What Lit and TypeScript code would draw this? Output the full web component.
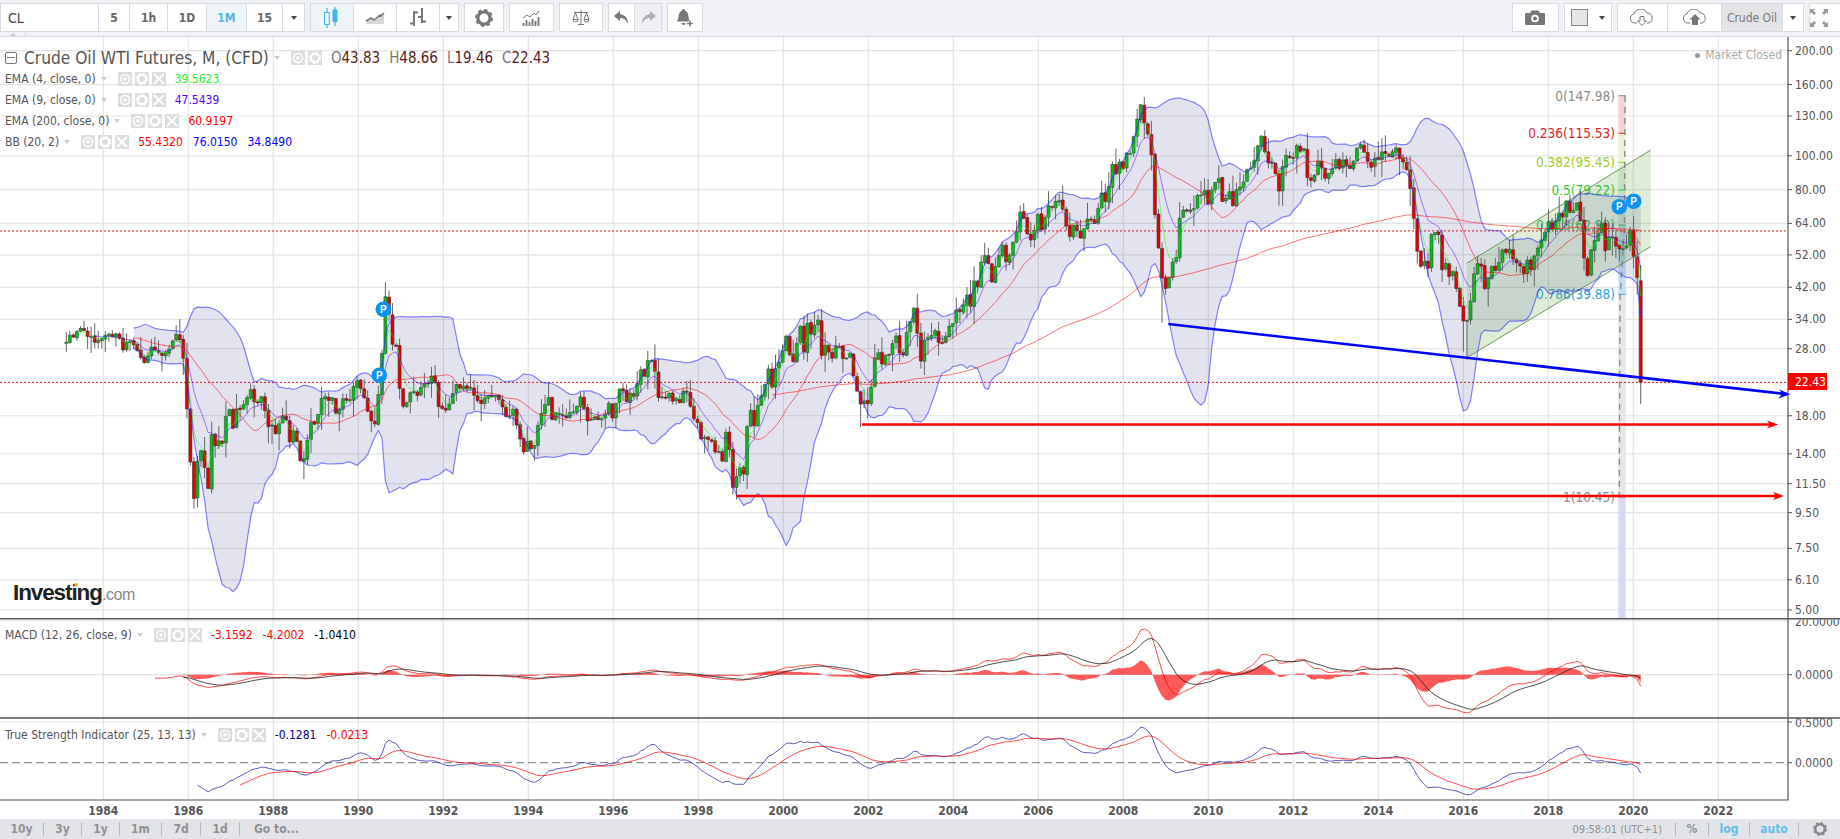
import { LitElement, html, svg, css, nothing } from "lit";
import { customElement } from "lit/decorators.js";

// monthly closes, Mar 1983 .. Mar 2020
const CLOSES = [
  29.27, 30.63, 30.25, 31.38, 32.0, 31.59, 30.36, 30.37, 29.23, 29.6,
  29.98, 30.55, 30.85, 30.26, 30.9, 29.98, 27.78, 29.28, 29.5, 28.75, 27.66, 26.41,
  25.56, 26.72, 28.29, 27.76, 27.38, 26.8, 27.26, 27.94, 29.5, 30.81, 29.72, 26.3,
  18.83, 13.26, 10.42, 13.34, 14.3, 12.78, 11.15, 15.9, 14.77, 15.27, 15.0, 17.94,
  18.75, 16.6, 18.83, 18.73, 19.38, 20.29, 21.37, 19.73, 19.59, 20.4, 18.64, 16.74,
  16.94, 16.01, 17.08, 17.99, 17.51, 15.16, 16.31, 15.18, 13.37, 13.58, 15.32, 17.24,
  17.03, 18.15, 20.19, 20.42, 19.9, 20.27, 18.31, 18.83, 20.13, 19.94, 19.89, 21.82,
  22.68, 21.54, 20.28, 18.54, 17.4, 17.07, 20.69, 27.17, 39.51, 35.23, 28.85, 28.44,
  21.54, 19.16, 19.63, 20.96, 21.13, 20.56, 21.68, 22.26, 22.23, 23.37, 22.42, 19.12,
  18.9, 18.68, 19.44, 20.85, 22.11, 21.6, 21.87, 21.48, 21.71, 20.62, 19.89, 19.5,
  20.26, 20.6, 20.44, 20.53, 20.02, 19.09, 17.89, 18.01, 18.79, 16.92, 15.43, 14.17,
  15.19, 14.48, 14.79, 16.9, 18.31, 19.37, 20.3, 17.56, 18.39, 18.19, 18.05, 17.76,
  18.39, 18.49, 19.17, 20.38, 18.89, 17.4, 17.56, 17.84, 17.54, 17.64, 18.18, 19.55,
  17.74, 19.54, 21.47, 21.2, 19.76, 20.92, 20.42, 22.25, 24.38, 23.35, 25.92, 25.92,
  24.15, 20.3, 20.41, 20.21, 20.88, 19.8, 20.14, 19.61, 21.18, 21.08, 19.15, 17.64,
  17.21, 15.44, 15.61, 15.39, 15.2, 14.18, 14.21, 13.34, 16.14, 14.42, 11.22, 12.05,
  12.75, 12.27, 16.76, 18.66, 16.84, 19.29, 20.53, 22.11, 24.51, 21.75, 24.59, 25.6,
  27.64, 30.43, 26.9, 25.74, 29.01, 32.5, 27.43, 33.12, 30.84, 32.7, 33.82, 26.8,
  28.66, 27.39, 26.29, 28.46, 28.37, 26.25, 26.35, 27.2, 23.43, 21.18, 19.44, 19.84,
  19.48, 21.74, 26.31, 27.29, 25.31, 26.86, 26.97, 28.98, 30.45, 27.22, 26.89, 31.2,
  33.51, 36.6, 31.04, 25.8, 29.56, 30.19, 30.54, 31.57, 29.2, 29.11, 30.41, 32.52,
  33.05, 36.16, 35.76, 37.38, 39.88, 37.05, 43.8, 42.12, 49.64, 51.76, 49.13, 43.45,
  48.2, 51.75, 55.4, 49.72, 51.97, 56.5, 60.57, 68.94, 66.24, 59.76, 57.32, 61.04,
  67.92, 61.41, 66.63, 71.88, 71.29, 73.93, 74.4, 70.26, 62.91, 58.73, 63.13, 61.05,
  58.14, 61.79, 65.87, 65.71, 64.01, 70.68, 78.21, 74.04, 81.66, 94.53, 88.71, 95.98,
  91.75, 101.84, 101.58, 113.46, 127.35, 140.0, 124.08, 115.46, 100.64, 67.81, 54.43, 44.6,
  41.68, 44.76, 49.66, 51.12, 66.31, 69.89, 69.45, 69.96, 70.61, 77.0, 77.28, 79.36,
  72.89, 79.66, 83.76, 86.15, 73.97, 75.63, 78.85, 71.92, 79.97, 81.43, 84.11, 91.38,
  92.19, 96.97, 106.72, 113.93, 102.7, 95.42, 95.7, 88.81, 79.2, 93.19, 100.36, 98.83,
  98.48, 107.07, 103.02, 104.87, 86.53, 84.96, 88.06, 96.47, 92.19, 86.24, 88.91, 91.82,
  97.49, 92.05, 97.23, 93.46, 91.97, 96.56, 105.03, 107.65, 102.33, 96.38, 92.72, 98.42,
  97.49, 102.59, 101.58, 99.74, 102.71, 105.37, 98.17, 95.96, 91.16, 80.54, 66.15, 53.27,
  48.24, 49.76, 47.6, 59.63, 60.3, 59.47, 47.12, 49.2, 45.09, 46.59, 41.65, 37.04,
  33.62, 33.75, 38.34, 45.92, 49.1, 48.33, 41.6, 44.7, 48.24, 46.86, 49.44, 53.72,
  52.81, 54.01, 50.6, 49.33, 48.32, 46.04, 50.17, 47.23, 51.67, 54.38, 57.4, 60.42,
  64.73, 61.64, 64.94, 68.57, 66.73, 74.15, 68.76, 69.8, 73.25, 65.31, 50.93, 45.41,
  53.79, 57.22, 60.14, 63.91, 53.5, 58.47, 58.58, 55.1, 54.07, 54.18, 55.17, 61.06,
  51.56, 44.76, 22.43,
];

const monthIndex = (y: number, m: number) => (y - 1983) * 12 + m - 3;

// wicks read off the chart where they stand out
const HIGHS: Record<number, number> = {
  [monthIndex(1990, 10)]: 41.15,
  [monthIndex(2008, 7)]: 147.27,
  [monthIndex(2020, 3)]: 48.66,
};
const LOWS: Record<number, number> = {
  [monthIndex(1986, 3)]: 9.75,
  [monthIndex(1998, 12)]: 10.35,
  [monthIndex(2001, 11)]: 16.7,
  [monthIndex(2008, 12)]: 33.2,
  [monthIndex(2016, 1)]: 27.5,
  [monthIndex(2016, 2)]: 26.05,
  [monthIndex(2020, 3)]: 19.46,
};

type Series = (number | null)[];

const barX = (i: number) => 66.3 + i * 3.546;
const yearX = (year: number) => 103.3 + (year - 1984) * 42.5;
const priceY = (p: number) => 50.7 + 151.6 * Math.log(200 / p);
const MACD_ZERO = 674.7;
const macdY = (v: number) => MACD_ZERO - v * 2.75;
const TSI_ZERO = 762.7;
const tsiY = (v: number) => TSI_ZERO - v * 81.4;

function ema(src: Series, n: number): Series {
  const out: Series = src.map(() => null);
  const first = src.findIndex((v) => v !== null);
  if (first < 0) return out;
  const k = 2 / (n + 1);
  let sum = 0;
  for (let i = first; i < src.length; i++) {
    const v = src[i] as number;
    if (i < first + n - 1) {
      sum += v;
    } else if (i === first + n - 1) {
      out[i] = (sum + v) / n;
    } else {
      out[i] = v * k + (out[i - 1] as number) * (1 - k);
    }
  }
  return out;
}

function diff(a: Series, b: Series): Series {
  return a.map((v, i) => (v === null || b[i] === null ? null : v - (b[i] as number)));
}

function linePath(src: Series, toY: (v: number) => number): string {
  let d = "";
  src.forEach((v, i) => {
    if (v === null) return;
    d += `${d ? "L" : "M"}${barX(i).toFixed(1)} ${toY(v).toFixed(1)}`;
  });
  return d;
}

// bollinger bands on the close
const mid: Series = CLOSES.map(() => null);
const upper: Series = CLOSES.map(() => null);
const lower: Series = CLOSES.map(() => null);
for (let i = 19; i < CLOSES.length; i++) {
  const win = CLOSES.slice(i - 19, i + 1);
  const m = win.reduce((a, b) => a + b, 0) / 20;
  const sd = Math.sqrt(win.reduce((a, b) => a + (b - m) * (b - m), 0) / 20);
  mid[i] = m;
  upper[i] = m + 2 * sd;
  lower[i] = m - 2 * sd;
}

const macdLine = diff(ema(CLOSES, 12), ema(CLOSES, 26));
const macdSignal = ema(macdLine, 9);
const macdHist = diff(macdLine, macdSignal);

const mom: Series = CLOSES.map((c, i) => (i === 0 ? null : c - CLOSES[i - 1]));
const absMom: Series = mom.map((v) => (v === null ? null : Math.abs(v)));
const tsiNum = ema(ema(mom, 25), 13);
const tsiDen = ema(ema(absMom, 25), 13);
const tsi: Series = tsiNum.map((v, i) => (v === null ? null : v / (tsiDen[i] as number)));
const tsiSignal = ema(tsi, 13);

function bandPath(): string {
  const top = linePath(upper, priceY);
  let back = "";
  for (let i = CLOSES.length - 1; i >= 19; i--) {
    back += `L${barX(i).toFixed(1)} ${priceY(lower[i] as number).toFixed(1)}`;
  }
  return top + back + "Z";
}

function histPath(): string {
  const first = macdHist.findIndex((v) => v !== null);
  let d = `M${barX(first).toFixed(1)} ${MACD_ZERO}`;
  for (let i = first; i < macdHist.length; i++) {
    d += `L${barX(i).toFixed(1)} ${macdY(macdHist[i] as number).toFixed(1)}`;
  }
  return d + `L${barX(macdHist.length - 1).toFixed(1)} ${MACD_ZERO}Z`;
}

function candlePaths() {
  let seed = 7;
  const rnd = () => {
    seed = (seed * 16807) % 2147483647;
    return (seed % 10000) / 10000;
  };
  let wicks = "";
  let up = "";
  let down = "";
  CLOSES.forEach((c, i) => {
    const open = i === monthIndex(2020, 3) ? 43.83 : i === 0 ? 29.0 : CLOSES[i - 1] * (1 + (rnd() - 0.5) * 0.012);
    const r1 = rnd();
    const r2 = rnd();
    const hi = HIGHS[i] ?? Math.max(open, c) * (1.004 + r1 * r1 * 0.11);
    const lo = LOWS[i] ?? Math.min(open, c) * (0.996 - r2 * r2 * 0.11);
    const x = barX(i);
    wicks += `M${x.toFixed(1)} ${priceY(hi).toFixed(1)}V${priceY(lo).toFixed(1)}`;
    const top = priceY(Math.max(open, c));
    const h = Math.max(priceY(Math.min(open, c)) - top, 1);
    const body = `M${(x - 1.5).toFixed(1)} ${top.toFixed(1)}h3v${h.toFixed(1)}h-3z`;
    if (c >= open) up += body;
    else down += body;
  });
  return { wicks, up, down };
}

const GRID_YEARS = Array.from({ length: 20 }, (_, i) => 1984 + i * 2);
const PRICE_TICKS: [number, string][] = [
  [200, "200.00"], [160, "160.00"], [130, "130.00"], [100, "100.00"], [80, "80.00"], [64, "64.00"],
  [52, "52.00"], [42, "42.00"], [34, "34.00"], [28, "28.00"], [18, "18.00"], [14, "14.00"],
  [11.5, "11.50"], [9.5, "9.50"], [7.5, "7.50"], [6.1, "6.10"], [5, "5.00"],
];

// fibonacci retracement column: label, y, text colour
const FIBS: [string, number, string][] = [
  ["0(147.98)", 95.7, "#8a8a8a"],
  ["0.236(115.53)", 133.3, "#d9272e"],
  ["0.382(95.45)", 162.3, "#9ccc2c"],
  ["0.5(79.22)", 190, "#2ecc3c"],
  ["0.618(62.99)", 225, "#45b56a"],
  ["0.786(39.88)", 294.3, "#2f9fd6"],
  ["1(10.45)", 497, "#8a8a8a"],
];

const gearIcon = (size: number, color: string) => svg`
  <svg width=${size} height=${size} viewBox="0 0 24 24">
    <circle cx="12" cy="12" r="8.2" fill="none" stroke=${color} stroke-width="4.4"></circle>
    <circle cx="12" cy="12" r="10" fill="none" stroke=${color} stroke-width="4" stroke-dasharray="3.9 3.95"></circle>
  </svg>`;

const caret = () => html`<span class="caret"></span>`;

@customElement("app-root")
export class AppRoot extends LitElement {
  static styles = css`
    :host {
      display: block;
      width: 1840px;
      height: 839px;
      overflow: hidden;
      background: #fff;
      font-family: "DejaVu Sans", "Liberation Sans", sans-serif;
      font-stretch: condensed;
      color: #555;
    }
    .toolbar {
      position: relative;
      display: flex;
      justify-content: space-between;
      height: 37px;
      box-sizing: border-box;
      padding-top: 3px;
      background: #eff1f5;
      border-bottom: 1px solid #d9dade;
      overflow: hidden;
    }
    .tools,
    .group {
      display: flex;
      height: 29px;
    }
    .tools {
      gap: 5px;
    }
    .group {
      box-sizing: border-box;
      background: #fff;
      border: 1px solid #d8dbe0;
    }
    .btn {
      display: flex;
      align-items: center;
      justify-content: center;
      box-sizing: border-box;
      height: 100%;
      border-right: 1px solid #d8dbe0;
      font-size: 12px;
      font-weight: bold;
      color: #666;
    }
    .btn:last-child {
      border-right: none;
    }
    .btn.on {
      background: #eff4f8;
      color: #4cb8e8;
    }
    .btn.shade {
      background: #eff0f3;
    }
    .btn.layout {
      background: #e4e4e6;
      font-weight: normal;
      color: #777;
    }
    .sym {
      justify-content: flex-start;
      padding-left: 7px;
      font-size: 14px;
      font-weight: normal;
      color: #444;
    }
    .w98 { width: 98px; }
    .w31 { width: 31px; }
    .w38 { width: 38px; }
    .w39 { width: 39px; }
    .w40 { width: 40px; }
    .w36 { width: 36px; }
    .w21 { width: 21px; }
    .w43 { width: 43px; }
    .w18 { width: 18px; }
    .w42 { width: 42.5px; }
    .w26 { width: 26px; }
    .w33 { width: 33.5px; }
    .w45 { width: 45px; }
    .w46 { width: 46px; }
    .w50 { width: 50.5px; }
    .w54 { width: 54px; }
    .w61 { width: 61px; }
    .w20 { width: 20px; }
    .fit {
      padding: 0 0 0 6px;
      gap: 11px;
      justify-content: flex-start;
    }
    .full {
      margin-right: -4px;
      width: 35px;
    }
    .swatch {
      box-sizing: border-box;
      width: 17px;
      height: 17px;
      background: #e6e6e6;
      border: 1px solid #888;
    }
    .caret {
      width: 0;
      height: 0;
      border-left: 3.5px solid transparent;
      border-right: 3.5px solid transparent;
      border-top: 4px solid #444;
    }
    .handle {
      position: absolute;
      left: 0;
      top: 32px;
      width: 25px;
      height: 5px;
      border-right: 1px solid #d9dade;
    }
    .handle::before {
      content: "";
      position: absolute;
      left: 10px;
      top: 1px;
      border-left: 3px solid transparent;
      border-right: 3px solid transparent;
      border-bottom: 3px solid #c4c6cc;
    }
    .chart {
      position: relative;
      height: 782px;
    }
    .chart > svg {
      display: block;
    }
    .legend {
      position: absolute;
      left: 5px;
      display: flex;
      flex-direction: column;
      font-size: 12px;
    }
    .legend.main {
      top: 11px;
    }
    .legend.macd {
      top: 587px;
    }
    .legend.tsi {
      top: 687px;
    }
    .row {
      display: flex;
      align-items: center;
      height: 21px;
      white-space: nowrap;
    }
    .title {
      height: 20px;
      font-size: 17.2px;
      color: #555;
    }
    .minus {
      box-sizing: border-box;
      position: relative;
      width: 12px;
      height: 12px;
      margin-right: 7px;
      border: 1px solid #777;
      border-radius: 2px;
    }
    .minus::after {
      content: "";
      position: absolute;
      left: 1px;
      right: 1px;
      top: 4px;
      height: 1px;
      background: #777;
    }
    .drop {
      width: 0;
      height: 0;
      margin: 0 11px 0 5px;
      border-left: 3px solid transparent;
      border-right: 3px solid transparent;
      border-top: 4px solid #ccc;
    }
    .mini {
      display: flex;
      gap: 3px;
      margin-right: 9px;
    }
    .mini span {
      display: flex;
      align-items: center;
      justify-content: center;
      width: 14px;
      height: 14px;
      background: #ddd;
    }
    .vals {
      display: flex;
      gap: 10px;
    }
    .ohlc {
      display: flex;
      gap: 9px;
      font-size: 15px;
      color: #777;
    }
    .ohlc b {
      font-weight: normal;
      color: #5c1a1a;
    }
    .closed {
      position: absolute;
      right: 58px;
      top: 11px;
      display: flex;
      align-items: center;
      gap: 5px;
      font-size: 12px;
      color: #aaa;
    }
    .closed i {
      width: 5px;
      height: 5px;
      border-radius: 50%;
      background: #999;
    }
    .logo {
      position: absolute;
      left: 13px;
      top: 543px;
      display: flex;
      align-items: baseline;
      font-family: "Liberation Sans", sans-serif;
      font-stretch: normal;
      font-size: 22.5px;
      font-weight: bold;
      letter-spacing: -1.1px;
      color: #222;
    }
    .logo small {
      font-size: 16px;
      font-weight: normal;
      letter-spacing: -0.4px;
      color: #888;
    }
    .logo i {
      position: absolute;
      left: 61px;
      top: 3px;
      width: 4px;
      height: 3px;
      border-radius: 50%;
      background: #f7a21b;
    }
    .footer {
      display: flex;
      align-items: center;
      justify-content: space-between;
      height: 20px;
      background: #e3e4e8;
      font-size: 12px;
      font-weight: bold;
      color: #909090;
    }
    .footer .side {
      display: flex;
      align-items: center;
      height: 14px;
    }
    .footer span {
      display: flex;
      align-items: center;
      height: 100%;
      justify-content: center;
      box-sizing: border-box;
    }
    .sep {
      border-right: 1px solid #b8b9be;
    }
    .blue {
      color: #5cc0ea;
    }
    .f44 { width: 44px; }
    .f38 { width: 38px; }
    .f42 { width: 42px; }
    .f39 { width: 39px; }
    .goto {
      padding-left: 14px;
    }
    .clock {
      font-size: 11px;
      font-weight: normal;
      padding-right: 13px;
    }
    .f33 { width: 33px; }
    .f41 { width: 41px; }
    .f49 { width: 49px; }
    .tick {
      font-size: 12px;
      fill: #555;
      dominant-baseline: central;
    }
    .year {
      font-size: 12px;
      font-weight: bold;
      fill: #555;
      text-anchor: middle;
    }
    .fib {
      font-size: 13.5px;
      text-anchor: end;
      dominant-baseline: central;
    }
    .tag {
      font-size: 12px;
      fill: #fff;
      dominant-baseline: central;
    }
    .pin {
      font-family: "Liberation Sans", sans-serif;
      font-size: 10px;
      font-weight: bold;
      fill: #fff;
      text-anchor: middle;
      dominant-baseline: central;
    }
  `;

  private renderToolbar() {
    return html`
      <div class="toolbar">
        <div class="tools">
          <div class="group">
            <div class="btn w98 sym">CL</div>
            <div class="btn w31">5</div>
            <div class="btn w38">1h</div>
            <div class="btn w39">1D</div>
            <div class="btn w40 on">1M</div>
            <div class="btn w36">15</div>
            <div class="btn w21">${caret()}</div>
          </div>
          <div class="group">
            <div class="btn w43 on">
              <svg width="20" height="22" viewBox="0 0 20 22">
                <path d="M5 1v20M13 0v19" stroke="#3db5e8" stroke-width="1.2"></path>
                <rect x="2.6" y="5.5" width="4.6" height="12" fill="#fff" stroke="#3db5e8" stroke-width="1.1"></rect>
                <rect x="10.5" y="2.5" width="5" height="12.5" fill="#3db5e8"></rect>
              </svg>
            </div>
            <div class="btn w43">
              <svg width="20" height="14" viewBox="0 0 20 14">
                <path d="M1 13V10l5-3 3 2 6-5 1 1 3-3v11z" fill="#d6d6d6"></path>
                <path d="M1 10l5-3 3 2 6-5 1 1 3-3" fill="none" stroke="#777" stroke-width="1.6"></path>
              </svg>
            </div>
            <div class="btn w43">
              <svg width="18" height="19" viewBox="0 0 18 19">
                <path d="M5 3v15M13 0v15M5 4.500h4M1 15.500h4M9 9h4M13 13.500h4" fill="none" stroke="#777" stroke-width="2"></path>
              </svg>
            </div>
            <div class="btn w18">${caret()}</div>
          </div>
          <div class="group"><div class="btn w38">${gearIcon(18, "#777")}</div></div>
          <div class="group">
            <div class="btn w42">
              <svg width="18" height="16" viewBox="0 0 18 16">
                <path d="M1.5 16v-3M4.5 16v-6M7.5 16v-4M10.5 16v-7M13.5 16v-5M16.5 16v-9" stroke="#777" stroke-width="1.8"></path>
                <path d="M1 8l4-3 3 2 4-4 2 2 3-4" fill="none" stroke="#777" stroke-width="1"></path>
              </svg>
            </div>
          </div>
          <div class="group">
            <div class="btn w42">
              <svg width="18" height="15" viewBox="0 0 18 15">
                <path d="M2 2.5h14M9 0v14M6 14.5h6M3.5 3L1 9.5M3.5 3L6 9.5M14.5 3L12 9.5M14.5 3L17 9.5" fill="none" stroke="#777" stroke-width="1"></path>
                <path d="M1 9.5h5a2.5 2.5 0 0 1-5 0zM12 9.5h5a2.5 2.5 0 0 1-5 0z" fill="none" stroke="#777" stroke-width="1"></path>
              </svg>
            </div>
          </div>
          <div class="group">
            <div class="btn w26">
              <svg width="15" height="13" viewBox="0 0 15 13"><path d="M6 0L0 5l6 5V7c4 0 6 2 8 6 0-6-3-9-8-10z" fill="#777"></path></svg>
            </div>
            <div class="btn w26 shade">
              <svg width="15" height="13" viewBox="0 0 15 13"><path d="M9 0l6 5-6 5V7c-4 0-6 2-8 6 0-6 3-9 8-10z" fill="#b0b0b0"></path></svg>
            </div>
          </div>
          <div class="group">
            <div class="btn w33">
              <svg width="18" height="18" viewBox="0 0 18 18">
                <path d="M7.5 0a1.3 1.3 0 0 1 1.3 1.5C11.5 2.3 12.3 5 12.5 8c.2 2.2.9 3.3 1.8 4.5H0.7C1.6 11.3 2.3 10.2 2.5 8c.2-3 1-5.7 3.7-6.5A1.3 1.3 0 0 1 7.5 0z" fill="#777"></path>
                <path d="M5.500 14h4a2 2 0 0 1-4 0z" fill="#777"></path>
                <path d="M14 11.5v6M11 14.5h6" stroke="#fff" stroke-width="3"></path>
                <path d="M14 11.5v6M11 14.5h6" stroke="#777" stroke-width="1.5"></path>
              </svg>
            </div>
          </div>
        </div>
        <div class="tools">
          <div class="group">
            <div class="btn w45">
              <svg width="20" height="15" viewBox="0 0 20 15">
                <path d="M1 3h4l1.5-2.500h7L15 3h4a1 1 0 0 1 1 1v10a1 1 0 0 1-1 1H1a1 1 0 0 1-1-1V4a1 1 0 0 1 1-1z" fill="#777"></path>
                <circle cx="10" cy="8.5" r="3.8" fill="#fff"></circle>
                <circle cx="10" cy="8.5" r="2" fill="#777"></circle>
              </svg>
            </div>
          </div>
          <div class="group">
            <div class="btn w46 fit"><span class="swatch"></span>${caret()}</div>
          </div>
          <div class="group">
            <div class="btn w50">
              <svg width="26" height="17" viewBox="0 0 26 17">
                <path d="M8 14H6A4.5 4.5 0 0 1 5 5.100 7 7 0 0 1 18 4a5.200 5.200 0 0 1 2 10h-2" fill="none" stroke="#777" stroke-width="1"></path>
                <path d="M11 7.5h4V12h2.5L13 16.5 8.5 12H11z" fill="#fff" stroke="#777" stroke-width="1"></path>
              </svg>
            </div>
            <div class="btn w54">
              <svg width="26" height="17" viewBox="0 0 26 17">
                <path d="M8 14H6A4.5 4.5 0 0 1 5 5.100 7 7 0 0 1 18 4a5.200 5.200 0 0 1 2 10h-2" fill="none" stroke="#777" stroke-width="1"></path>
                <path d="M13 5l5.5 5.500H16V16h-6v-5.500H7.500z" fill="#777"></path>
              </svg>
            </div>
            <div class="btn w61 layout">Crude Oil</div>
            <div class="btn w20">${caret()}</div>
          </div>
          <div class="group full">
            <div class="btn">
              <svg width="18" height="18" viewBox="0 0 18 18">
                <path d="M0 0h5L3.5 1.5 6 4 4 6 1.500 3.500 0 5zM18 0v5L16.500 3.500 14 6 12 4 14.500 1.500 13 0zM0 18v-5l1.500 1.500L4 12l2 2-2.500 2.500L5 18zM18 18h-5l1.500-1.500L12 14l2-2 2.500 2.500L18 13z" fill="#999"></path>
              </svg>
            </div>
          </div>
        </div>
        <div class="handle"></div>
      </div>
    `;
  }

  private renderPlot() {
    const { wicks, up, down } = candlePaths();
    const fibX = 1618.3;
    const fibW = 7.4;
    return svg`
      <svg width="1840" height="782" viewBox="0 37 1840 782">
        <!-- grid -->
        ${GRID_YEARS.map((y) => svg`<path d="M${yearX(y)} 37V800" stroke="#e4e4e4" stroke-width="1.2"></path>`)}
        ${PRICE_TICKS.map(([p]) => svg`<path d="M0 ${priceY(p)}H1788" stroke="#e4e4e4" stroke-width="1.2"></path>`)}
        <path d="M0 621H1788M0 ${MACD_ZERO}H1788M0 722H1788" stroke="#e4e4e4" stroke-width="1.2"></path>
        <path d="M0 ${TSI_ZERO}H1788" stroke="#777" stroke-dasharray="8 4"></path>

        <!-- fibonacci column -->
        <rect x=${fibX} y="95.7" width=${fibW} height="37.6" fill="#f4d3d3"></rect>
        <rect x=${fibX} y="133.3" width=${fibW} height="29" fill="#e9f4d9"></rect>
        <rect x=${fibX} y="162.3" width=${fibW} height="28" fill="#dcf2dc"></rect>
        <rect x=${fibX} y="190" width=${fibW} height="35" fill="#d9efe0"></rect>
        <rect x=${fibX} y="225" width=${fibW} height="69" fill="#c6e0f2"></rect>
        <rect x=${fibX} y="294.3" width=${fibW} height="202.7" fill="#e6e6e9"></rect>
        <rect x=${fibX} y="497" width=${fibW} height="122" fill="#d6d8f4"></rect>
        ${FIBS.map(
          ([label, y, color]) => svg`
            <text class="fib" x="1615" y=${y} fill=${color}>${label}</text>
            <path d="M${fibX} ${y}h${fibW}" stroke=${color}></path>`,
        )}

        <!-- price lines -->
        <path d="M0 ${priceY(60.92)}H1788M0 ${priceY(22.43)}H1788" stroke="#f01010" stroke-dasharray="2 2"></path>

        <!-- bollinger fill and rising channel -->
        <path d=${bandPath()} fill="#3c3c96" fill-opacity="0.14"></path>
        <path d="M1466.7 263.3L1650.7 150V246.7L1466.7 357.7Z" fill="#5ba03c" fill-opacity="0.2"></path>
        <path d="M1466.7 263.3L1650.7 150M1466.7 357.7L1650.7 246.7" stroke="#6c9a58" fill="none"></path>
        <path d="M1625 96L1624.5 225L1620 300L1619.3 497" fill="none" stroke="#8a8a8a" stroke-width="1.4" stroke-dasharray="6 5"></path>

        <!-- candles -->
        <path d=${wicks} stroke="#666" fill="none"></path>
        <path d=${up} fill="#08b81e" stroke="#3a4a3a" stroke-width="0.6"></path>
        <path d=${down} fill="#e40000" stroke="#4a2a2a" stroke-width="0.6"></path>

        <!-- indicators -->
        <path d=${linePath(ema(CLOSES, 4), priceY)} fill="none" stroke="#00ff00" stroke-opacity="0.5"></path>
        <path d=${linePath(ema(CLOSES, 9), priceY)} fill="none" stroke="#5500ff" stroke-opacity="0.5"></path>
        <path d=${linePath(ema(CLOSES, 200), priceY)} fill="none" stroke="#ff0000" stroke-opacity="0.55"></path>
        <path d=${linePath(mid, priceY)} fill="none" stroke="#ff0000" stroke-opacity="0.55"></path>
        <path d=${linePath(upper, priceY)} fill="none" stroke="#2222ff" stroke-opacity="0.55" stroke-width="1.2"></path>
        <path d=${linePath(lower, priceY)} fill="none" stroke="#2222ff" stroke-opacity="0.55" stroke-width="1.2"></path>

        <!-- drawn trend lines -->
        <path d="M1168.3 324L1783 393.7" stroke="#0000ff" stroke-width="2.6"></path>
        <path d="M1790.7 394.3L1779 389.5L1782.5 393.7L1778 398.5Z" fill="#0000ff"></path>
        <path d="M862 424.5H1772" stroke="#ff0000" stroke-width="2.6"></path>
        <path d="M1778.3 424.5L1767 420.5L1770 424.5L1767 428.5Z" fill="#ff0000"></path>
        <path d="M736.7 496H1780" stroke="#ff0000" stroke-width="2.6"></path>
        <path d="M1784 496L1773 492L1776 496L1773 500Z" fill="#ff0000"></path>

        <!-- position pins -->
        ${[
          [383.3, 309.3],
          [379.3, 375.3],
          [1619.3, 206.7],
          [1633.7, 201.3],
        ].map(
          ([x, y]) => svg`
            <circle cx=${x} cy=${y} r="7.8" fill="#0b94ef"></circle>
            <text class="pin" x=${x} y=${y}>P</text>`,
        )}

        <!-- macd pane -->
        <path d=${histPath()} fill="#ff0000" fill-opacity="0.65"></path>
        <path d=${linePath(macdLine, macdY)} fill="none" stroke="#ff0000" stroke-opacity="0.7"></path>
        <path d=${linePath(macdSignal, macdY)} fill="none" stroke="#222" stroke-opacity="0.8"></path>

        <!-- tsi pane -->
        <path d=${linePath(tsi, tsiY)} fill="none" stroke="#3333aa" stroke-opacity="0.8"></path>
        <path d=${linePath(tsiSignal, tsiY)} fill="none" stroke="#ff0000" stroke-opacity="0.7"></path>

        <!-- axes -->
        ${PRICE_TICKS.map(
          ([p, label]) => svg`
            <path d="M1788 ${priceY(p)}h4" stroke="#555"></path>
            <text class="tick" x="1795" y=${priceY(p)}>${label}</text>`,
        )}
        <text class="tick" x="1795" y="622">20.0000</text>
        <rect x="1789" y="615.5" width="51" height="4" fill="#fff"></rect>
        <path d="M1788 ${MACD_ZERO}h4M1788 722h4M1788 ${TSI_ZERO}h4" stroke="#555"></path>
        <text class="tick" x="1795" y=${MACD_ZERO}>0.0000</text>
        <text class="tick" x="1795" y="722.5">0.5000</text>
        <text class="tick" x="1795" y=${TSI_ZERO}>0.0000</text>
        <path d="M0 618.7H1840M0 718H1840" stroke="#555" stroke-width="1.4"></path>
        <path d="M1788 37V800H0" fill="none" stroke="#555" stroke-width="1.2"></path>
        ${GRID_YEARS.map((y) => (y <= 2022 ? svg`<text class="year" x=${yearX(y)} y="815">${y}</text>` : nothing))}

        <rect x="1788" y="373" width="39" height="17" fill="#ff0000"></rect>
        <text class="tag" x="1795" y="381.7">22.43</text>
      </svg>
    `;
  }

  private miniButtons(withClose: boolean) {
    return html`
      <div class="mini">
        <span>
          <svg width="12" height="12" viewBox="0 0 12 12">
            <circle cx="6" cy="6" r="4.5" fill="none" stroke="#fff" stroke-width="1.5"></circle>
            <circle cx="6" cy="6" r="1.8" fill="#fff"></circle>
          </svg>
        </span>
        <span>${gearIcon(12, "#fff")}</span>
        ${withClose
          ? html`<span>
              <svg width="12" height="12" viewBox="0 0 12 12"><path d="M1 1l10 10M11 1L1 11" stroke="#fff" stroke-width="1.8"></path></svg>
            </span>`
          : nothing}
      </div>
    `;
  }

  private legendRow(name: string, values: [string, string][]) {
    return html`
      <div class="row">
        <span>${name}</span>
        <span class="drop"></span>
        ${this.miniButtons(true)}
        <div class="vals">
          ${values.map(([v, color]) => html`<span style="color:${color}">${v}</span>`)}
        </div>
      </div>
    `;
  }

  render() {
    return html`
      ${this.renderToolbar()}
      <div class="chart">
        ${this.renderPlot()}
        <div class="legend main">
          <div class="row title">
            <span class="minus"></span>
            <span>Crude Oil WTI Futures, M, (CFD)</span>
            <span class="drop"></span>
            ${this.miniButtons(false)}
            <div class="ohlc">
              <span>O<b>43.83</b></span>
              <span>H<b>48.66</b></span>
              <span>L<b>19.46</b></span>
              <span>C<b>22.43</b></span>
            </div>
          </div>
          ${this.legendRow("EMA (4, close, 0)", [["39.5623", "#22ee22"]])}
          ${this.legendRow("EMA (9, close, 0)", [["47.5439", "#5500ff"]])}
          ${this.legendRow("EMA (200, close, 0)", [["60.9197", "#ff0000"]])}
          ${this.legendRow("BB (20, 2)", [
            ["55.4320", "#ff0000"],
            ["76.0150", "#0000ff"],
            ["34.8490", "#0000ff"],
          ])}
        </div>
        <div class="legend macd">
          ${this.legendRow("MACD (12, 26, close, 9)", [
            ["-3.1592", "#ff0000"],
            ["-4.2002", "#ff0000"],
            ["-1.0410", "#000"],
          ])}
        </div>
        <div class="legend tsi">
          ${this.legendRow("True Strength Indicator (25, 13, 13)", [
            ["-0.1281", "#000080"],
            ["-0.0213", "#ff0000"],
          ])}
        </div>
        <div class="closed"><i></i>Market Closed</div>
        <div class="logo">Investing<small>.com</small><i></i></div>
      </div>
      <div class="footer">
        <div class="side">
          <span class="f44 sep">10y</span>
          <span class="f38 sep">3y</span>
          <span class="f38 sep">1y</span>
          <span class="f42 sep">1m</span>
          <span class="f39 sep">7d</span>
          <span class="f39 sep">1d</span>
          <span class="goto">Go to...</span>
        </div>
        <div class="side">
          <span class="clock sep">09:58:01 (UTC+1)</span>
          <span class="f33 sep">%</span>
          <span class="f41 sep blue">log</span>
          <span class="f49 sep blue">auto</span>
          <span class="f41">${gearIcon(14, "#888")}</span>
        </div>
      </div>
    `;
  }
}
